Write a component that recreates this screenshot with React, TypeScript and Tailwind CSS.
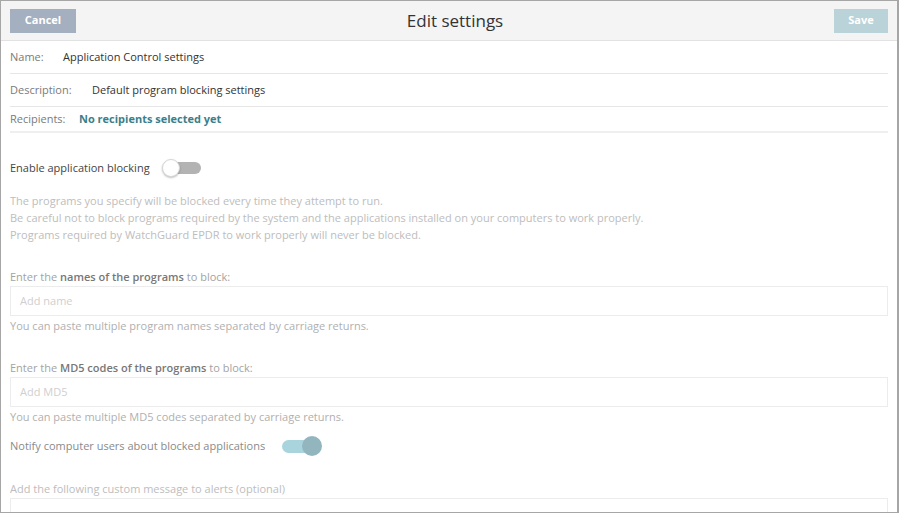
import React from 'react';

const font = { fontFamily: '"Open Sans", "Noto Sans", sans-serif' };

function Toggle({ on }: { on: boolean }) {
  if (on) {
    return (
      <div className="relative h-[20px] w-[40px]">
        <div className="absolute left-0 top-[4px] h-[13px] w-[36px] rounded-full bg-[#a9d4de]" />
        <div className="absolute right-0 top-0 h-[20px] w-[20px] rounded-full bg-[#93b6be]" />
      </div>
    );
  }
  return (
    <div className="relative h-[20px] w-[40px]">
      <div className="absolute right-[1px] top-[4px] h-[12px] w-[34px] rounded-full bg-[#b3b3b3]" />
      <div className="absolute left-0 top-[1px] h-[18px] w-[18px] rounded-full border border-[#d6d6d6] bg-white shadow-[0_1px_2px_rgba(0,0,0,0.25)]" />
    </div>
  );
}

export default function App() {
  return (
    <div
      className="h-[513px] w-[899px] overflow-hidden border border-r-2 border-[#a6a6a6] bg-white text-[11px]"
      style={font}
    >
      {/* Header */}
      <div className="flex h-[40px] items-center justify-between border-b border-[#e2e2e2] bg-[#f4f4f4] px-[9px]">
        <button className="h-[24px] w-[66px] bg-[#a4afbf] text-[11px] font-bold text-white">Cancel</button>
        <h1 className="text-[17px] text-[#333]">Edit settings</h1>
        <button className="h-[24px] w-[54px] bg-[#b9d3d8] text-[11px] font-bold text-white">Save</button>
      </div>

      <div className="px-[9px]">
        {/* Name / Description / Recipients */}
        <div className="flex h-[33px] items-center border-b border-[#e6e6e6] pt-[1px]">
          <span className="w-[53px] text-[#7a7a7a]">Name:</span>
          <span className="text-[#333]">Application Control settings</span>
        </div>
        <div className="flex h-[33px] items-center border-b border-[#e6e6e6] pt-[1px]">
          <span className="w-[82px] text-[#7a7a7a]">Description:</span>
          <span className="text-[#333]">Default program blocking settings</span>
        </div>
        <div className="flex h-[26px] items-center border-b-2 border-[#efefef]">
          <span className="w-[69px] text-[#7a7a7a]">Recipients:</span>
          <span className="font-bold text-[#3b7f8b]">No recipients selected yet</span>
        </div>

        {/* Enable blocking */}
        <div className="mt-[25px] flex items-center gap-[12px]">
          <span className="text-[#444]">Enable application blocking</span>
          <Toggle on={false} />
        </div>

        <div className="mt-[14px] leading-[17px] text-[#bdbdbd]">
          <p>The programs you specify will be blocked every time they attempt to run.</p>
          <p>Be careful not to block programs required by the system and the applications installed on your computers to work properly.</p>
          <p>Programs required by WatchGuard EPDR to work properly will never be blocked.</p>
        </div>

        {/* Names */}
        <p className="mt-[25px] leading-[17px] text-[#a3a3a3]">
          Enter the <span className="font-semibold text-[#777]">names of the programs</span> to block:
        </p>
        <div className="mt-[1px] flex h-[30px] items-center border border-[#ececec] px-[9px] text-[#cfcfcf]">
          Add name
        </div>
        <p className="mt-[1px] leading-[17px] text-[#b0b0b0]">You can paste multiple program names separated by carriage returns.</p>

        {/* MD5 */}
        <p className="mt-[25px] leading-[17px] text-[#a3a3a3]">
          Enter the <span className="font-semibold text-[#777]">MD5 codes of the programs</span> to block:
        </p>
        <div className="mt-[1px] flex h-[30px] items-center border border-[#ececec] px-[9px] text-[#cfcfcf]">
          Add MD5
        </div>
        <p className="mt-[1px] leading-[17px] text-[#b0b0b0]">You can paste multiple MD5 codes separated by carriage returns.</p>

        {/* Notify */}
        <div className="mt-[11px] flex items-center gap-[17px]">
          <span className="text-[#8a8a8a]">Notify computer users about blocked applications</span>
          <Toggle on={true} />
        </div>

        <p className="mt-[24px] leading-[17px] text-[#bdbdbd]">Add the following custom message to alerts (optional)</p>
        <div className="mt-[1px] h-[40px] border border-[#ececec]" />
      </div>
    </div>
  );
}
